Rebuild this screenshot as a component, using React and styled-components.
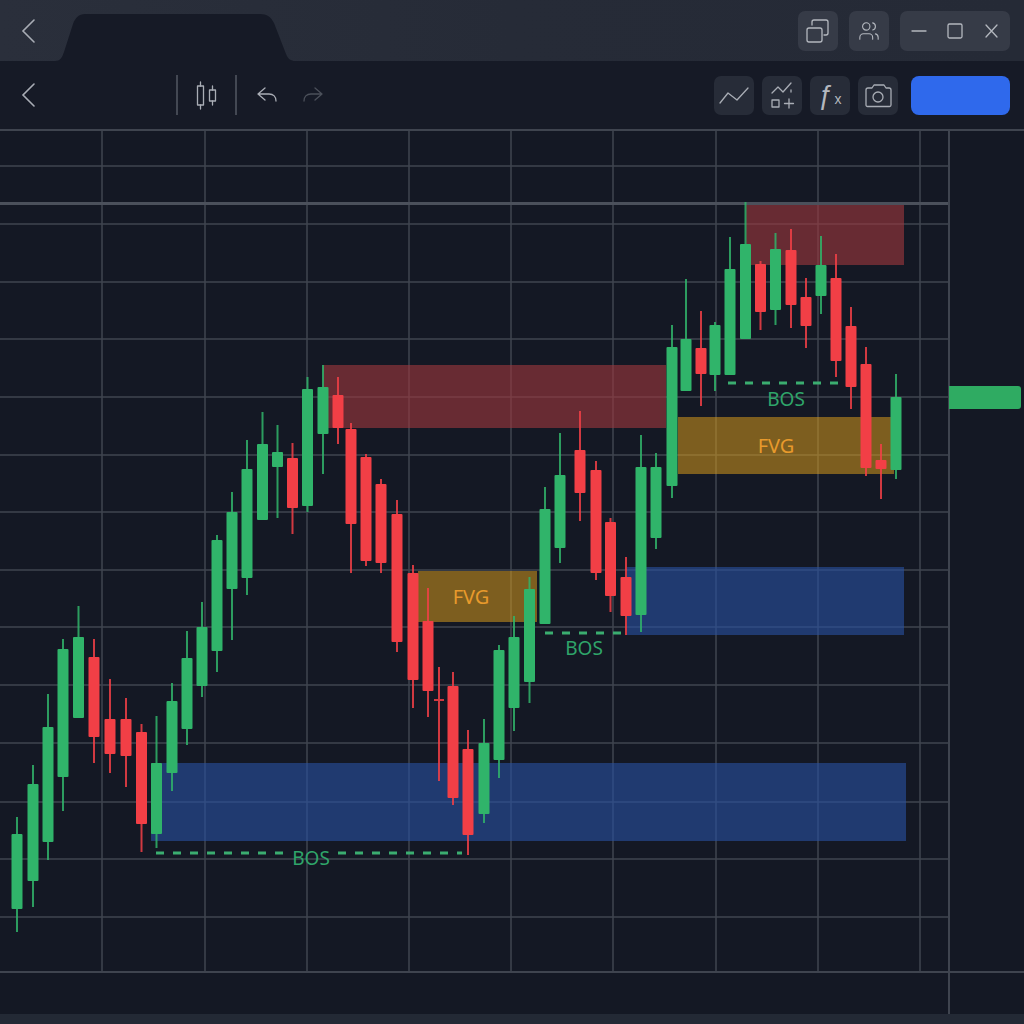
import React from "react";
import styled, { createGlobalStyle } from "styled-components";
import { Users } from "lucide-react";

const GRID_X = [102, 205, 307, 409, 511, 613, 716, 818, 920];
const GRID_Y = [166, 224, 282, 339, 397, 455, 512, 570, 627, 685, 743, 802, 859, 917];

// x, wick top, body top, body bottom, wick bottom, colour
const CANDLES = [
  [17, 817, 834, 909, 932, "g"],
  [33, 765, 784, 881, 907, "g"],
  [48, 694, 727, 842, 860, "g"],
  [63, 639, 649, 777, 811, "g"],
  [78.5, 606, 637, 718, 718, "g"],
  [94, 639, 657, 737, 763, "r"],
  [110, 679, 719, 754, 773, "r"],
  [126, 698, 719, 756, 787, "r"],
  [141.5, 724, 732, 824, 852, "r"],
  [156.5, 716, 763, 834, 848, "g"],
  [172, 683, 701, 773, 791, "g"],
  [187, 631, 658, 729, 745, "g"],
  [202, 602, 627, 686, 697, "g"],
  [217, 535, 540, 651, 672, "g"],
  [232, 492, 512, 589, 640, "g"],
  [247, 440, 469, 578, 595, "g"],
  [262.5, 412, 444, 520, 520, "g"],
  [277.5, 425, 452, 467, 518, "g"],
  [292.5, 443, 458, 508, 534, "r"],
  [307.5, 377, 389, 506, 512, "g"],
  [323, 365, 387, 434, 474, "g"],
  [338, 377, 395, 428, 444, "r"],
  [351, 423, 429, 524, 573, "r"],
  [366, 454, 457, 561, 566, "r"],
  [381, 479, 484, 563, 573, "r"],
  [397, 500, 514, 642, 652, "r"],
  [413, 565, 573, 680, 708, "r"],
  [428, 588, 621, 691, 717, "r"],
  [453, 672, 686, 798, 805, "r"],
  [468, 730, 749, 835, 855, "r"],
  [484, 719, 743, 814, 823, "g"],
  [499, 645, 650, 760, 778, "g"],
  [514, 616, 637, 708, 731, "g"],
  [529.5, 577, 589, 682, 703, "g"],
  [545, 487, 509, 624, 624, "g"],
  [560, 433, 475, 548, 563, "g"],
  [580, 411, 450, 493, 521, "r"],
  [596, 461, 470, 573, 580, "r"],
  [610.5, 518, 522, 596, 612, "r"],
  [626, 557, 577, 616, 635, "r"],
  [641, 435, 467, 615, 632, "g"],
  [656, 453, 467, 538, 549, "g"],
  [672, 325, 347, 486, 498, "g"],
  [686, 279, 339, 391, 391, "g"],
  [701, 311, 348, 374, 406, "r"],
  [715, 322, 325, 375, 391, "g"],
  [730, 237, 269, 375, 375, "g"],
  [745.5, 202, 244, 339, 339, "g"],
  [760.5, 261, 264, 312, 330, "r"],
  [775.5, 233, 249, 310, 325, "g"],
  [791, 229, 250, 305, 328, "r"],
  [806, 278, 297, 326, 348, "r"],
  [821, 236, 265, 296, 314, "g"],
  [836, 254, 278, 361, 377, "r"],
  [851, 307, 326, 387, 409, "r"],
  [866, 347, 364, 468, 476, "r"],
  [881, 444, 460, 469, 499, "r"],
  [896, 374, 397, 470, 479, "g"],
];

const ZONES = [
  [323, 365, 343, 63, "red"],
  [746, 202, 158, 63, "red"],
  [418, 571, 119, 51, "fvg"],
  [678, 417, 216, 57, "fvg"],
  [151, 763, 755, 78, "blue"],
  [627, 567, 277, 68, "blue"],
];

const ZONE_FILL = {
  red: "rgba(160, 56, 61, 0.6)",
  fvg: "rgba(222, 160, 26, 0.52)",
  blue: "rgba(40, 81, 163, 0.6)",
};

const BOS_LINES = [
  [156, 286, 853],
  [338, 462, 853],
  [545, 622, 633],
  [728, 840, 383],
];

const COLOR = { g: "#30b46a", r: "#f23f46" };

const Candle = ({ data }) => {
  const [x, wickTop, top, bottom, wickBottom, tone] = data;
  return (
    <g fill={COLOR[tone]}>
      <rect x={x - 1} y={wickTop} width="2" height={wickBottom - wickTop} opacity="0.85" />
      <rect x={x - 5.5} y={top} width="11" height={bottom - top} rx="1" />
    </g>
  );
};

const Chart = () => (
  <ChartSvg viewBox="0 131 948 840">
    {GRID_Y.map((y) => (
      <line key={y} x1="0" x2="948" y1={y} y2={y} stroke="#3f444f" strokeWidth="1.5" />
    ))}
    {GRID_X.map((x) => (
      <line key={x} x1={x} x2={x} y1="131" y2="971" stroke="#3f444f" strokeWidth="1.5" />
    ))}
    {ZONES.map(([x, y, w, h, kind]) => (
      <rect key={`${x}-${y}`} x={x} y={y} width={w} height={h} fill={ZONE_FILL[kind]} />
    ))}
    <rect x="0" y="202" width="948" height="3" fill="#4b505b" />
    {BOS_LINES.map(([x1, x2, y]) => (
      <line
        key={`${x1}-${y}`}
        x1={x1}
        x2={x2}
        y1={y}
        y2={y}
        stroke="#3bad70"
        strokeWidth="3"
        strokeDasharray="8 9"
      />
    ))}
    {CANDLES.map((c) => (
      <Candle key={c[0]} data={c} />
    ))}
    <g fill="#f23f46" opacity="0.85">
      <rect x="438" y="667" width="2" height="114" />
      <rect x="434" y="699" width="10" height="2" />
    </g>
    <ChartLabel x="311" y="865" $tone="bos">BOS</ChartLabel>
    <ChartLabel x="584" y="655" $tone="bos">BOS</ChartLabel>
    <ChartLabel x="786" y="406" $tone="bos">BOS</ChartLabel>
    <ChartLabel x="471" y="604" $tone="fvg">FVG</ChartLabel>
    <ChartLabel x="776" y="453" $tone="fvg">FVG</ChartLabel>
  </ChartSvg>
);

const IconSvg = ({ size = 40, height, children }) => (
  <svg
    width={size}
    height={height || size}
    viewBox={`0 0 ${size} ${height || size}`}
    fill="none"
    stroke="currentColor"
    strokeWidth="1.3"
    strokeLinecap="round"
    strokeLinejoin="round"
  >
    {children}
  </svg>
);

const Chevron = () => (
  <svg width="16" height="24" viewBox="0 0 16 24" fill="none" stroke="currentColor" strokeWidth="1.6" strokeLinecap="round">
    <path d="M13 1 L2 12 L13 23" />
  </svg>
);

export default function App() {
  return (
    <>
      <GlobalStyle />
      <Page>
        <TitleBar>
          <BackButton>
            <Chevron />
          </BackButton>
          <Tab />
          <TitleActions>
            <ActionButton>
              <IconSvg>
                <rect x="9" y="17" width="15" height="14" rx="2" />
                <path d="M14 14 V11 a2 2 0 0 1 2-2 H28 a2 2 0 0 1 2 2 V22 a2 2 0 0 1-2 2 H26" />
              </IconSvg>
            </ActionButton>
            <ActionButton>
              <Users size={22} strokeWidth={1.2} />
            </ActionButton>
            <WindowControls>
              <IconSvg size={110} height={40}>
                <path d="M12 20 H26" />
                <rect x="48" y="13" width="14" height="14" rx="1.5" />
                <path d="M86 14 L97 26 M97 14 L86 26" />
              </IconSvg>
            </WindowControls>
          </TitleActions>
        </TitleBar>

        <Toolbar>
          <BackButton>
            <Chevron />
          </BackButton>
          <ToolGroup>
            <Separator />
            <ChartTypeButton>
              <IconSvg size={22} height={30}>
                <path d="M4.5 2 V6 M4.5 25 V29 M16.5 6 V10 M16.5 21 V25" />
                <rect x="1.5" y="6" width="6" height="19" />
                <rect x="13.5" y="10" width="6" height="11" />
              </IconSvg>
            </ChartTypeButton>
            <Separator />
            <HistoryButton>
              <IconSvg size={22} height={18}>
                <path d="M9 2 L2 8 L9 14 M2 8 H13 C17.5 8 20 11 20 15" />
              </IconSvg>
            </HistoryButton>
            <HistoryButton $disabled>
              <IconSvg size={22} height={18}>
                <path d="M13 2 L20 8 L13 14 M20 8 H9 C4.5 8 2 11 2 15" />
              </IconSvg>
            </HistoryButton>
          </ToolGroup>
          <ToolActions>
            <ToolButton>
              <IconSvg size={40} height={39}>
                <path d="M6 27 L14 17 L23 24 L34 12" />
              </IconSvg>
            </ToolButton>
            <ToolButton>
              <IconSvg size={40} height={39}>
                <path d="M10 17 L16 11 L21 16 L29 7 M29 14 V16" />
                <rect x="10" y="24" width="7" height="7" />
                <path d="M22.5 27.5 H31.5 M27 23 V32" />
              </IconSvg>
            </ToolButton>
            <ToolButton>
              <FxGlyph>
                ƒ<small>x</small>
              </FxGlyph>
            </ToolButton>
            <ToolButton>
              <IconSvg size={40} height={39}>
                <path d="M8 14 a2 2 0 0 1 2-2 H14 L16 9 H26 L28 12 H31 a2 2 0 0 1 2 2 V29 a1.5 1.5 0 0 1-1.5 1.5 H9.5 A1.5 1.5 0 0 1 8 29 Z" />
                <circle cx="20" cy="21" r="5" />
              </IconSvg>
            </ToolButton>
            <PrimaryButton />
          </ToolActions>
        </Toolbar>

        <ChartRow>
          <Plot>
            <Chart />
          </Plot>
          <PriceAxis>
            <PriceTag />
          </PriceAxis>
        </ChartRow>

        <TimeStrip>
          <TimeAxis />
        </TimeStrip>
        <Footer />
      </Page>
    </>
  );
}

const GlobalStyle = createGlobalStyle`
  html, body {
    margin: 0;
    padding: 0;
    background: #141824;
    font-family: "Noto Sans", sans-serif;
  }
  * {
    box-sizing: border-box;
  }
`;

const Page = styled.div`
  display: flex;
  flex-direction: column;
  width: 1024px;
  height: 1024px;
  overflow: hidden;
  background: #141824;
`;

const TitleBar = styled.header`
  display: flex;
  align-items: flex-end;
  height: 61px;
  padding-right: 14px;
  background: linear-gradient(90deg, #2a2f3b 0%, #262b37 50%, #252a36 100%);
`;

const BackButton = styled.div`
  display: flex;
  align-items: center;
  align-self: stretch;
  width: 55px;
  padding-left: 21px;
  color: #a9adb5;
`;

const Tab = styled.div`
  width: 240px;
  height: 47px;
  background: #161a26;
  clip-path: path("M0 47 C5 47 7 44 9 38 L18 10 C20 4 24 0 30 0 L205 0 C212 0 216 3 219 9 L231 40 C233 45 236 47 240 47 Z");
`;

const TitleActions = styled.div`
  display: flex;
  align-self: flex-start;
  gap: 11px;
  margin-top: 11px;
  margin-left: auto;
  color: #b4b8bf;
`;

const ActionButton = styled.div`
  display: flex;
  align-items: center;
  justify-content: center;
  width: 40px;
  height: 40px;
  border-radius: 7px;
  background: #363b47;
`;

const WindowControls = styled(ActionButton)`
  width: 110px;
`;

const Toolbar = styled.div`
  display: flex;
  align-items: center;
  height: 70px;
  padding-right: 14px;
  border-bottom: 2px solid #3f444f;
  background: #161a26;
`;

const ToolGroup = styled.div`
  display: flex;
  align-items: center;
  margin-left: 121px;
  color: #a9adb5;
`;

const Separator = styled.span`
  width: 2px;
  height: 40px;
  background: #434853;
`;

const ChartTypeButton = styled.div`
  display: flex;
  justify-content: center;
  width: 57px;
`;

const HistoryButton = styled.div`
  display: flex;
  width: 46px;
  padding-left: 19px;
  color: ${(p) => (p.$disabled ? "#4b505a" : "#a9adb5")};
`;

const ToolActions = styled.div`
  display: flex;
  gap: 8px;
  margin-left: auto;
  color: #a9adb5;
`;

const ToolButton = styled.div`
  display: flex;
  align-items: center;
  justify-content: center;
  width: 40px;
  height: 39px;
  border-radius: 7px;
  background: #272c38;
`;

const FxGlyph = styled.span`
  font-family: "Liberation Sans", sans-serif;
  font-size: 27px;
  line-height: 1;
  color: #b4b8bf;

  small {
    font-size: 14px;
    margin-left: 1px;
  }
`;

const PrimaryButton = styled.div`
  width: 99px;
  height: 39px;
  margin-left: 5px;
  border-radius: 8px;
  background: #2f69ec;
`;

const ChartRow = styled.div`
  display: flex;
  height: 842px;
  border-bottom: 2px solid #3f444f;
`;

const Plot = styled.div`
  width: 950px;
  border-right: 2px solid #3f444f;
`;

const ChartSvg = styled.svg`
  display: block;
  width: 948px;
  height: 840px;
`;

const ChartLabel = styled.text`
  font-family: "Noto Sans", sans-serif;
  font-size: ${(p) => (p.$tone === "fvg" ? "20px" : "19px")};
  text-anchor: middle;
  fill: ${(p) => (p.$tone === "fvg" ? "#e89a2c" : "#2fa56a")};
`;

const PriceAxis = styled.div`
  flex: 1;
  margin-left: -1px;
  padding-top: 255px;
`;

const PriceTag = styled.div`
  width: 72px;
  height: 23px;
  border-radius: 0 3px 3px 0;
  background: #2fab62;
`;

const TimeStrip = styled.div`
  height: 41px;
`;

const TimeAxis = styled.div`
  width: 950px;
  height: 100%;
  border-right: 2px solid #3f444f;
`;

const Footer = styled.div`
  flex: 1;
  background: #232935;
`;
